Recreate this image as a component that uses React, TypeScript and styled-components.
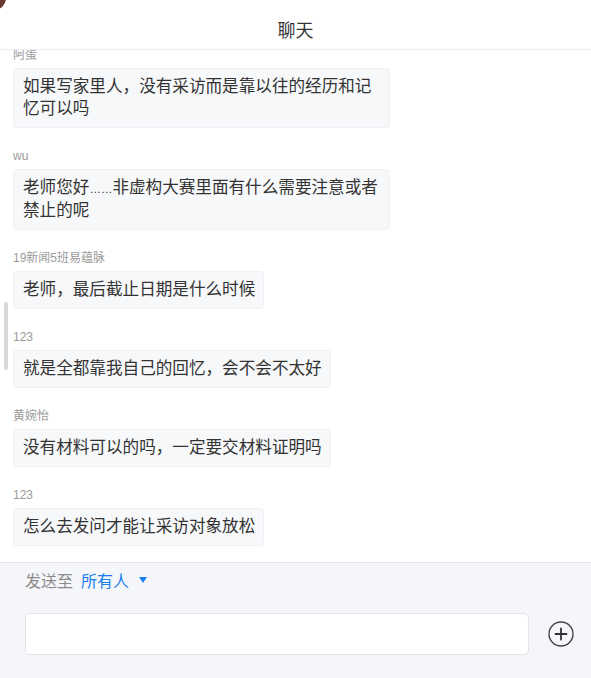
import * as React from "react";
import styled, { createGlobalStyle } from "styled-components";

const GlobalStyle = createGlobalStyle`
    html, body {
        margin: 0;
        padding: 0;
        background: #ffffff;
    }
    body {
        font-family: "Liberation Sans", "Noto Sans CJK SC", sans-serif;
    }
`;

const Page = styled.div`
    position: relative;
    width: 591px;
    height: 678px;
    display: flex;
    flex-direction: column;
    overflow: hidden;
    background: #ffffff;
`;

const Corner = styled.div`
    position: absolute;
    left: -6px;
    top: -6px;
    width: 12px;
    height: 16px;
    border-radius: 0 0 12px 0;
    background: #6b3a2e;
`;

const Header = styled.div`
    height: 50px;
    flex: none;
    box-sizing: border-box;
    padding-top: 8px;
    display: flex;
    align-items: center;
    justify-content: center;
    border-bottom: 1px solid #ebedf0;
    font-size: 18px;
    color: #333333;
`;

const MessageList = styled.div`
    position: relative;
    flex: 1;
    overflow: hidden;
    padding: 0 13px;
`;

const ListInner = styled.div`
    margin-top: -5px;
    display: flex;
    flex-direction: column;
    gap: 18px;
`;

const Scrollbar = styled.div`
    position: absolute;
    left: 4px;
    top: 252px;
    width: 4px;
    height: 68px;
    border-radius: 2px;
    background: #d6d7da;
`;

const Item = styled.div`
    display: flex;
    flex-direction: column;
    align-items: flex-start;
`;

const Name = styled.div`
    font-size: 12px;
    line-height: 20px;
    height: 20px;
    color: #9a9a9a;
    margin-bottom: 3px;
`;

const Bubble = styled.div`
    max-width: 358px;
    padding: 7px 8px 7px 9px;
    font-size: 16.6px;
    line-height: 22px;
    color: #333333;
    background: #f7f8fa;
    border: 1px solid #f0f1f4;
    border-radius: 4px;
`;

const Ellipsis = styled.span`
    font-size: 11.5px;
`;

const Footer = styled.div`
    height: 116px;
    flex: none;
    border-top: 1px solid #e4e6eb;
    background: #f5f6fa;
    display: flex;
    flex-direction: column;
    padding: 5px 0 0 25px;
    box-sizing: border-box;
`;

const SendTo = styled.div`
    display: flex;
    align-items: center;
    height: 24px;
    font-size: 16px;
    color: #8a8a8a;
    gap: 8px;
`;

const Target = styled.span`
    color: #1a7ef2;
    display: flex;
    align-items: center;
    gap: 10px;
`;

const Caret = styled.span`
    width: 0;
    height: 0;
    border-left: 4.5px solid transparent;
    border-right: 4.5px solid transparent;
    border-top: 6px solid #1a7ef2;
`;

const InputRow = styled.div`
    display: flex;
    align-items: center;
    margin-top: 21px;
`;

const Input = styled.div`
    width: 504px;
    height: 42px;
    box-sizing: border-box;
    background: #ffffff;
    border: 1px solid #e1e3e8;
    border-radius: 5px;
`;

const PlusButton = styled.div`
    margin-left: 19px;
    width: 26px;
    height: 26px;
    display: flex;
`;

const messages: { name: string; text: React.ReactNode }[] = [
    { name: "阿蛋", text: "如果写家里人，没有采访而是靠以往的经历和记忆可以吗" },
    { name: "wu", text: <>老师您好<Ellipsis>……</Ellipsis>非虚构大赛里面有什么需要注意或者禁止的呢</> },
    { name: "19新闻5班易蕴脉", text: "老师，最后截止日期是什么时候" },
    { name: "123", text: "就是全都靠我自己的回忆，会不会不太好" },
    { name: "黄婉怡", text: "没有材料可以的吗，一定要交材料证明吗" },
    { name: "123", text: "怎么去发问才能让采访对象放松" }
];

export default function App() {
    return <Page>
        <GlobalStyle />
        <Corner />
        <Header>聊天</Header>
        <MessageList>
            <Scrollbar />
            <ListInner>
                {messages.map((m, i) => <Item key={i}>
                    <Name>{m.name}</Name>
                    <Bubble>{m.text}</Bubble>
                </Item>)}
            </ListInner>
        </MessageList>
        <Footer>
            <SendTo>
                发送至
                <Target>所有人<Caret /></Target>
            </SendTo>
            <InputRow>
                <Input />
                <PlusButton>
                    <svg width="26" height="26" viewBox="0 0 26 26">
                        <circle cx="13" cy="13" r="12" fill="none" stroke="#444" strokeWidth="1.4" />
                        <path d="M13 7.5v11M7.5 13h11" stroke="#333" strokeWidth="1.8" strokeLinecap="round" />
                    </svg>
                </PlusButton>
            </InputRow>
        </Footer>
    </Page>;
}
